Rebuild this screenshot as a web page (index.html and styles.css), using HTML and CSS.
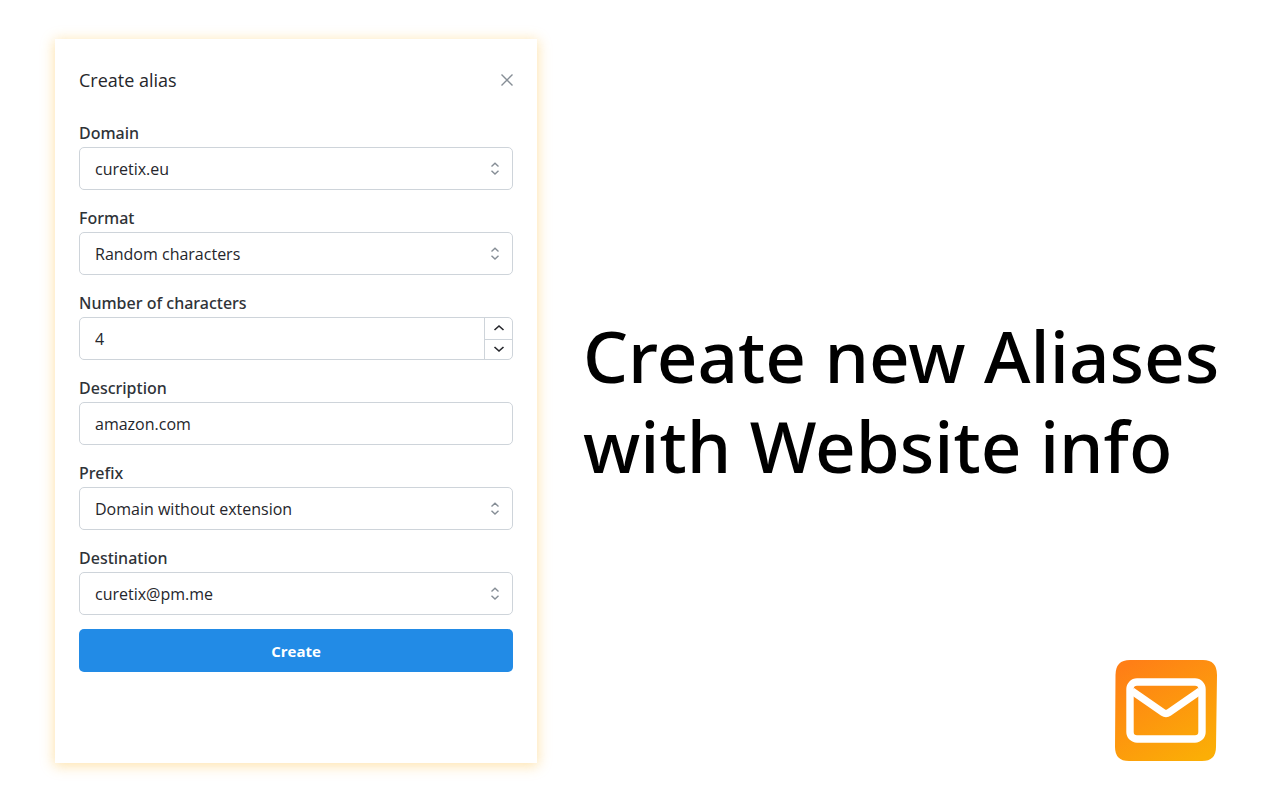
FILE: index.html
```html
<!DOCTYPE html>
<html lang="en">
<head>
<meta charset="utf-8">
<meta name="viewport" content="width=device-width, initial-scale=1">
<title>Create alias</title>
<link rel="stylesheet" href="styles.css">
</head>
<body>
<svg class="sprite" aria-hidden="true">
  <symbol id="selector" viewBox="0 0 16 16">
    <path d="M4.500 5.500 8 2.200l3.500 3.300M4.500 9.700 8 13l3.500-3.300" fill="none" stroke="currentColor" stroke-width="1.400"/>
  </symbol>
</svg>
<main class="page">
  <section class="card">
    <header class="card-header">
      <h2 class="card-title">Create alias</h2>
      <button class="close" type="button" aria-label="Close">
        <svg viewBox="0 0 14 14" width="14" height="14"><path d="M2.500 1.500l11 11M13.500 1.500l-11 11" fill="none" stroke="currentColor" stroke-width="1.400"/></svg>
      </button>
    </header>
    <form class="form">
      <div class="field">
        <label class="label" for="domain">Domain</label>
        <div class="control">
          <select class="input" id="domain"><option>curetix.eu</option></select>
          <svg class="selector"><use href="#selector"/></svg>
        </div>
      </div>
      <div class="field">
        <label class="label" for="format">Format</label>
        <div class="control">
          <select class="input" id="format"><option>Random characters</option></select>
          <svg class="selector"><use href="#selector"/></svg>
        </div>
      </div>
      <div class="field">
        <label class="label" for="count">Number of characters</label>
        <div class="control">
          <input class="input" id="count" type="number" value="4">
          <div class="stepper">
            <button class="step" type="button" aria-label="Increase"><svg viewBox="0 0 12 8" width="12" height="8"><path d="M1.500 6 6 2l4.500 4" fill="none" stroke="currentColor" stroke-width="1.600"/></svg></button>
            <button class="step" type="button" aria-label="Decrease"><svg viewBox="0 0 12 8" width="12" height="8"><path d="M1.500 2 6 6l4.500-4" fill="none" stroke="currentColor" stroke-width="1.600"/></svg></button>
          </div>
        </div>
      </div>
      <div class="field">
        <label class="label" for="description">Description</label>
        <div class="control">
          <input class="input" id="description" type="text" value="amazon.com">
        </div>
      </div>
      <div class="field">
        <label class="label" for="prefix">Prefix</label>
        <div class="control">
          <select class="input" id="prefix"><option>Domain without extension</option></select>
          <svg class="selector"><use href="#selector"/></svg>
        </div>
      </div>
      <div class="field">
        <label class="label" for="destination">Destination</label>
        <div class="control">
          <select class="input" id="destination"><option>curetix@pm.me</option></select>
          <svg class="selector"><use href="#selector"/></svg>
        </div>
      </div>
      <button class="submit" type="submit">Create</button>
    </form>
  </section>
  <section class="hero">
    <h1 class="headline">Create new Aliases<br>with Website info</h1>
    <svg class="logo" viewBox="0 0 102 103" role="img" aria-label="Mail">
      <defs>
        <linearGradient id="glow" x1="0.2" y1="0" x2="0.8" y2="1">
          <stop offset="0" stop-color="#ff7f16"/>
          <stop offset="1" stop-color="#fbae06"/>
        </linearGradient>
      </defs>
      <path d="M15 0H88Q102 0 102 15L101 87Q101 101 87 101H14Q0 101 0 87L.5 15Q.5 0 15 0Z" fill="url(#glow)"/>
      <rect x="15" y="22" width="72" height="57" rx="7" fill="none" stroke="#fff" stroke-width="7.4"/>
      <path d="M17 31 48 52.500Q51 54.500 54 52.500L85 31" fill="none" stroke="#fff" stroke-width="7.4"/>
    </svg>
  </section>
</main>
</body>
</html>
```
FILE: styles.css
```css
*, *::before, *::after { box-sizing: border-box; }

body {
  margin: 0;
  background: #fff;
  color: #000;
  font-family: "Noto Sans", "Open Sans", sans-serif;
}

.sprite { display: none; }

.page {
  display: grid;
  grid-template-columns: minmax(0, 482fr) minmax(0, 634fr);
  column-gap: 46px;
  min-height: 100vh;
  padding: 39px 63px 37px 55px;
}

.card {
  padding: 24px;
  background: #fff;
  box-shadow: 0 2px 12px 1px rgba(252, 185, 50, 0.4);
}

.card-header {
  display: flex;
  align-items: center;
  justify-content: space-between;
  height: 34px;
  margin-bottom: 27px;
}

.card-title {
  margin: 0;
  color: #25262b;
  font-family: "Open Sans", sans-serif;
  font-size: 18px;
  font-weight: 400;
}

.close {
  display: flex;
  padding: 0;
  border: 0;
  background: none;
  color: #868e96;
}

.form {
  display: flex;
  flex-direction: column;
}

.field { margin-bottom: 19px; }
.field:last-of-type { margin-bottom: 14px; }

.label {
  display: block;
  height: 23px;
  color: #2f3338;
  font-size: 16px;
  font-weight: 500;
  line-height: 18px;
}

.control {
  display: grid;
  align-items: center;
}

.control > * { grid-area: 1 / 1; }

.input {
  width: 100%;
  height: 43px;
  padding: 0 15px;
  border: 1px solid #ced4da;
  border-radius: 5px;
  background: #fff;
  color: #25262b;
  font-family: "Open Sans", sans-serif;
  font-size: 16px;
  appearance: none;
}

.input[type="number"] { appearance: textfield; }

.selector {
  justify-self: end;
  width: 16px;
  height: 16px;
  margin-right: 10px;
  color: #868e96;
  pointer-events: none;
}

.stepper {
  display: grid;
  grid-template-rows: 1fr 1fr;
  place-self: stretch end;
  width: 28px;
  margin: 1px 1px 1px 0;
  border-left: 1px solid #ced4da;
}

.step {
  display: grid;
  place-items: center;
  padding: 0;
  border: 0;
  background: none;
  color: #25262b;
}

.step + .step { border-top: 1px solid #ced4da; }

.submit {
  height: 43px;
  border: 0;
  border-radius: 5px;
  background: #228be6;
  color: #fff;
  font-family: "Open Sans", sans-serif;
  font-size: 15px;
  font-weight: 700;
}

.hero {
  display: grid;
  grid-template-rows: 1fr auto 1fr;
  grid-template-columns: minmax(0, 1fr);
}

.headline {
  grid-row: 2;
  margin: 0;
  font-size: 71px;
  font-weight: 500;
  line-height: 90px;
  white-space: nowrap;
}

.logo {
  grid-row: 3;
  place-self: end;
  width: 102px;
  height: 103px;
}
```
